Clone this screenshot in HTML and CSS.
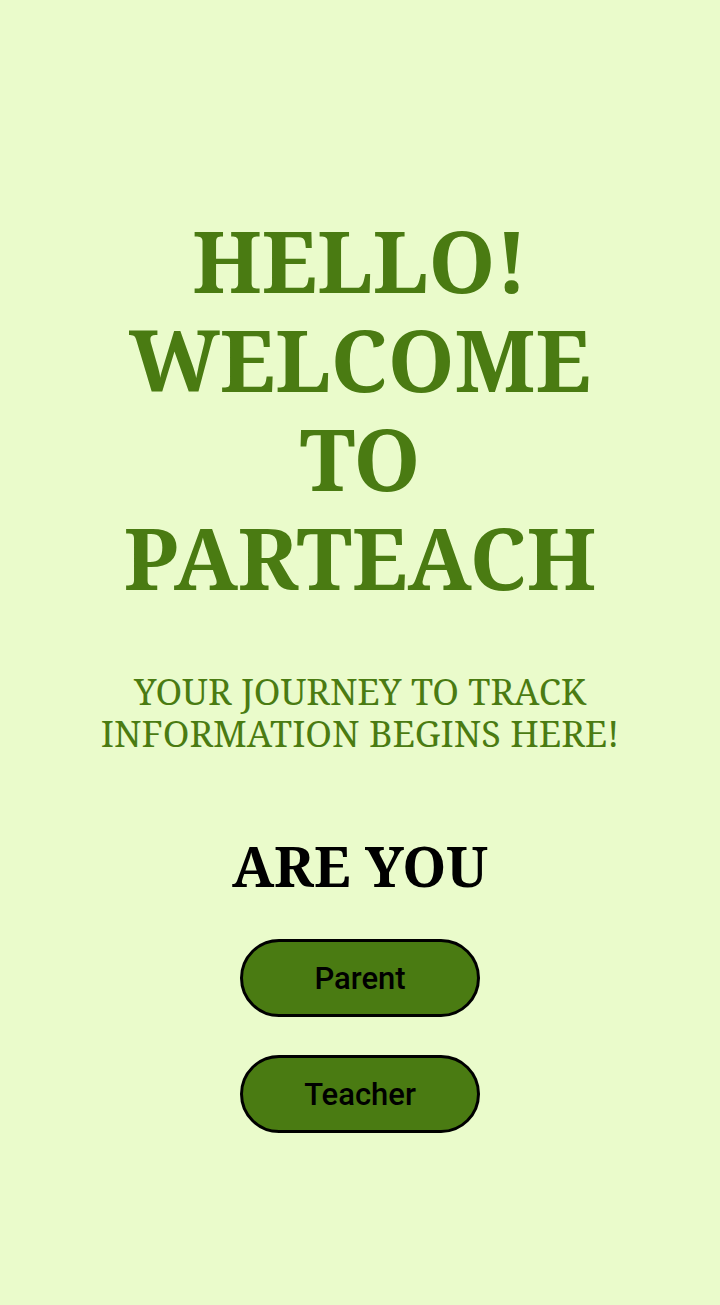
FILE: index.html
```html
<!DOCTYPE html>
<html>
<head>
<meta charset="utf-8">
<link rel="stylesheet" href="styles.css">
</head>
<body>
<main class="screen">
  <h1 class="title">HELLO!<br>WELCOME<br>TO<br>PARTEACH</h1>
  <p class="subtitle">YOUR JOURNEY TO TRACK<br>INFORMATION BEGINS HERE!</p>
  <h2 class="question">ARE YOU</h2>
  <div class="choices">
    <button class="choice">Parent</button>
    <button class="choice">Teacher</button>
  </div>
</main>
</body>
</html>
```
FILE: styles.css
```css
html, body {
  margin: 0;
  padding: 0;
  background: #eafbcb;
}
.screen {
  width: 720px;
  height: 1305px;
  display: flex;
  flex-direction: column;
  align-items: center;
  padding-top: 211px;
  box-sizing: border-box;
}
.title {
  margin: 0;
  font-family: "Noto Serif", "DejaVu Serif", serif;
  font-weight: 700;
  font-size: 85px;
  line-height: 99px;
  color: #4a7b12;
  text-align: center;
}
.subtitle {
  margin: 64px 0 0;
  font-family: "Noto Serif", "DejaVu Serif", serif;
  font-weight: 400;
  font-size: 36px;
  line-height: 42px;
  color: #4a7b12;
  text-align: center;
}
.question {
  margin: 75px 0 0;
  font-family: "Noto Serif", "DejaVu Serif", serif;
  font-weight: 700;
  font-size: 56px;
  line-height: 70px;
  color: #000;
}
.choices {
  margin-top: 39px;
  display: flex;
  flex-direction: column;
  gap: 38px;
}
.choice {
  width: 240px;
  height: 78px;
  border: 3px solid #000;
  border-radius: 39px;
  background: #4a7b12;
  color: #000;
  font-family: Roboto, "Noto Sans", sans-serif;
  font-weight: 500;
  font-size: 31px;
  padding: 0;
}
```
